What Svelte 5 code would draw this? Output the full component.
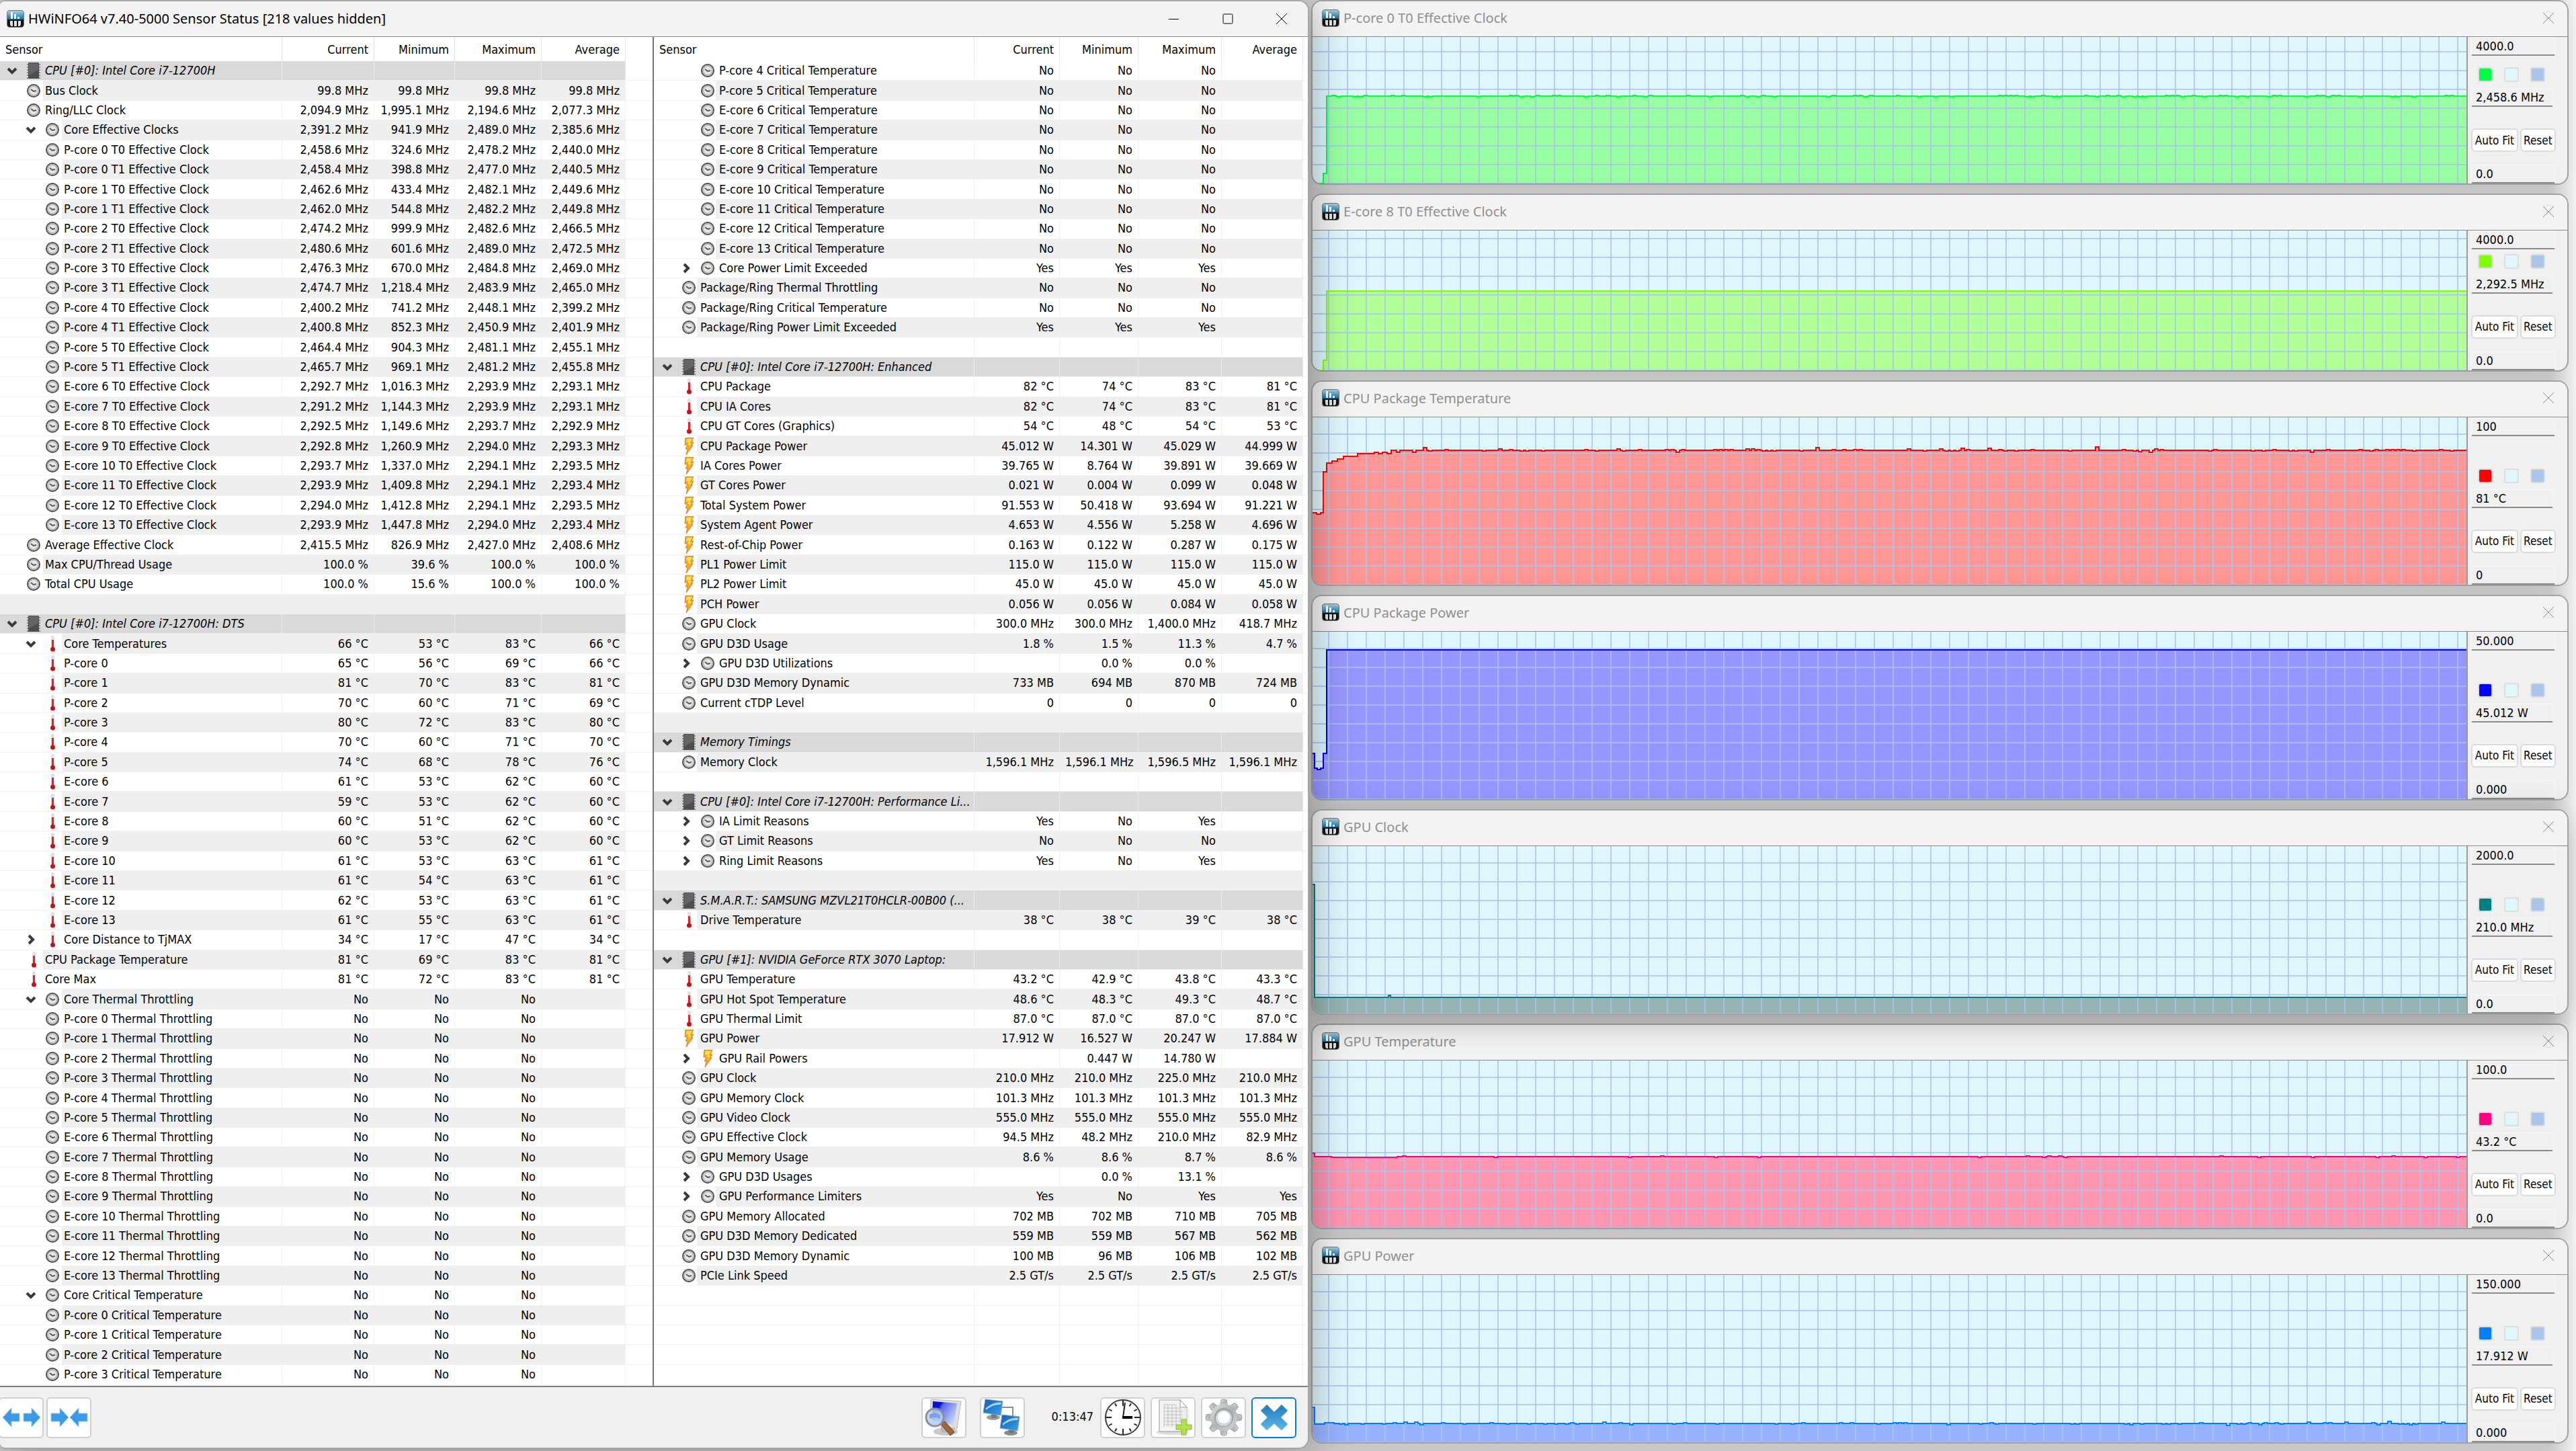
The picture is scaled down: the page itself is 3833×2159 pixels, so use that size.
<script>
  const head = (name) => ({ kind: "group", icon: "chip", name, open: true, values: ["", "", "", ""] });
  const item = (icon, name, values, level = 1, open = undefined) => ({
    kind: "item",
    icon,
    name,
    level,
    open,
    values: values.split("|")
  });
  const blank = () => ({ kind: "blank", name: "", values: ["", "", "", ""] });
  const mhz = (text) => text.split("|").map((v) => v + " MHz").join("|");
  const deg = (text) => text.split("|").map((v) => v + " °C").join("|");
  const watt = (text) => text.split("|").map((v) => v + " W").join("|");

  const NO = "No|No|No|";
  const YES = "Yes|Yes|Yes|";

  const cores = ["P-core 0", "P-core 1", "P-core 2", "P-core 3", "P-core 4", "P-core 5", "E-core 6", "E-core 7", "E-core 8", "E-core 9", "E-core 10", "E-core 11", "E-core 12", "E-core 13"];

  const effectiveClocks = [
    ["P-core 0 T0", "2,458.6|324.6|2,478.2|2,440.0"],
    ["P-core 0 T1", "2,458.4|398.8|2,477.0|2,440.5"],
    ["P-core 1 T0", "2,462.6|433.4|2,482.1|2,449.6"],
    ["P-core 1 T1", "2,462.0|544.8|2,482.2|2,449.8"],
    ["P-core 2 T0", "2,474.2|999.9|2,482.6|2,466.5"],
    ["P-core 2 T1", "2,480.6|601.6|2,489.0|2,472.5"],
    ["P-core 3 T0", "2,476.3|670.0|2,484.8|2,469.0"],
    ["P-core 3 T1", "2,474.7|1,218.4|2,483.9|2,465.0"],
    ["P-core 4 T0", "2,400.2|741.2|2,448.1|2,399.2"],
    ["P-core 4 T1", "2,400.8|852.3|2,450.9|2,401.9"],
    ["P-core 5 T0", "2,464.4|904.3|2,481.1|2,455.1"],
    ["P-core 5 T1", "2,465.7|969.1|2,481.2|2,455.8"],
    ["E-core 6 T0", "2,292.7|1,016.3|2,293.9|2,293.1"],
    ["E-core 7 T0", "2,291.2|1,144.3|2,293.9|2,293.1"],
    ["E-core 8 T0", "2,292.5|1,149.6|2,293.7|2,292.9"],
    ["E-core 9 T0", "2,292.8|1,260.9|2,294.0|2,293.3"],
    ["E-core 10 T0", "2,293.7|1,337.0|2,294.1|2,293.5"],
    ["E-core 11 T0", "2,293.9|1,409.8|2,294.1|2,293.4"],
    ["E-core 12 T0", "2,294.0|1,412.8|2,294.1|2,293.5"],
    ["E-core 13 T0", "2,293.9|1,447.8|2,294.0|2,293.4"]
  ];

  const coreTemps = [
    "65|56|69|66", "81|70|83|81", "70|60|71|69", "80|72|83|80", "70|60|71|70",
    "74|68|78|76", "61|53|62|60", "59|53|62|60", "60|51|62|60", "60|53|62|60",
    "61|53|63|61", "61|54|63|61", "62|53|63|61", "61|55|63|61"
  ];

  const leftRows = [
    head("CPU [#0]: Intel Core i7-12700H"),
    item("clock", "Bus Clock", mhz("99.8|99.8|99.8|99.8")),
    item("clock", "Ring/LLC Clock", mhz("2,094.9|1,995.1|2,194.6|2,077.3")),
    item("clock", "Core Effective Clocks", mhz("2,391.2|941.9|2,489.0|2,385.6"), 2, true),
    ...effectiveClocks.map(([name, v]) => item("clock", name + " Effective Clock", mhz(v), 2)),
    item("clock", "Average Effective Clock", mhz("2,415.5|826.9|2,427.0|2,408.6")),
    item("clock", "Max CPU/Thread Usage", "100.0 %|39.6 %|100.0 %|100.0 %"),
    item("clock", "Total CPU Usage", "100.0 %|15.6 %|100.0 %|100.0 %"),
    blank(),
    head("CPU [#0]: Intel Core i7-12700H: DTS"),
    item("temp", "Core Temperatures", deg("66|53|83|66"), 2, true),
    ...cores.map((name, i) => item("temp", name, deg(coreTemps[i]), 2)),
    item("temp", "Core Distance to TjMAX", deg("34|17|47|34"), 2, false),
    item("temp", "CPU Package Temperature", deg("81|69|83|81")),
    item("temp", "Core Max", deg("81|72|83|81")),
    item("clock", "Core Thermal Throttling", NO, 2, true),
    ...cores.map((name) => item("clock", name + " Thermal Throttling", NO, 2)),
    item("clock", "Core Critical Temperature", NO, 2, true),
    ...cores.slice(0, 4).map((name) => item("clock", name + " Critical Temperature", NO, 2))
  ];

  const rightRows = [
    ...cores.slice(4).map((name) => item("clock", name + " Critical Temperature", NO, 2)),
    item("clock", "Core Power Limit Exceeded", YES, 2, false),
    item("clock", "Package/Ring Thermal Throttling", NO),
    item("clock", "Package/Ring Critical Temperature", NO),
    item("clock", "Package/Ring Power Limit Exceeded", YES),
    blank(),
    head("CPU [#0]: Intel Core i7-12700H: Enhanced"),
    item("temp", "CPU Package", deg("82|74|83|81")),
    item("temp", "CPU IA Cores", deg("82|74|83|81")),
    item("temp", "CPU GT Cores (Graphics)", deg("54|48|54|53")),
    item("power", "CPU Package Power", watt("45.012|14.301|45.029|44.999")),
    item("power", "IA Cores Power", watt("39.765|8.764|39.891|39.669")),
    item("power", "GT Cores Power", watt("0.021|0.004|0.099|0.048")),
    item("power", "Total System Power", watt("91.553|50.418|93.694|91.221")),
    item("power", "System Agent Power", watt("4.653|4.556|5.258|4.696")),
    item("power", "Rest-of-Chip Power", watt("0.163|0.122|0.287|0.175")),
    item("power", "PL1 Power Limit", watt("115.0|115.0|115.0|115.0")),
    item("power", "PL2 Power Limit", watt("45.0|45.0|45.0|45.0")),
    item("power", "PCH Power", watt("0.056|0.056|0.084|0.058")),
    item("clock", "GPU Clock", mhz("300.0|300.0|1,400.0|418.7")),
    item("clock", "GPU D3D Usage", "1.8 %|1.5 %|11.3 %|4.7 %"),
    item("clock", "GPU D3D Utilizations", "|0.0 %|0.0 %|", 2, false),
    item("clock", "GPU D3D Memory Dynamic", "733 MB|694 MB|870 MB|724 MB"),
    item("clock", "Current cTDP Level", "0|0|0|0"),
    blank(),
    head("Memory Timings"),
    item("clock", "Memory Clock", mhz("1,596.1|1,596.1|1,596.5|1,596.1")),
    blank(),
    head("CPU [#0]: Intel Core i7-12700H: Performance Li..."),
    item("clock", "IA Limit Reasons", "Yes|No|Yes|", 2, false),
    item("clock", "GT Limit Reasons", "No|No|No|", 2, false),
    item("clock", "Ring Limit Reasons", "Yes|No|Yes|", 2, false),
    blank(),
    head("S.M.A.R.T.: SAMSUNG MZVL21T0HCLR-00B00 (..."),
    item("temp", "Drive Temperature", deg("38|38|39|38")),
    blank(),
    head("GPU [#1]: NVIDIA GeForce RTX 3070 Laptop:"),
    item("temp", "GPU Temperature", deg("43.2|42.9|43.8|43.3")),
    item("temp", "GPU Hot Spot Temperature", deg("48.6|48.3|49.3|48.7")),
    item("temp", "GPU Thermal Limit", deg("87.0|87.0|87.0|87.0")),
    item("power", "GPU Power", watt("17.912|16.527|20.247|17.884")),
    item("power", "GPU Rail Powers", "|0.447 W|14.780 W|", 2, false),
    item("clock", "GPU Clock", mhz("210.0|210.0|225.0|210.0")),
    item("clock", "GPU Memory Clock", mhz("101.3|101.3|101.3|101.3")),
    item("clock", "GPU Video Clock", mhz("555.0|555.0|555.0|555.0")),
    item("clock", "GPU Effective Clock", mhz("94.5|48.2|210.0|82.9")),
    item("clock", "GPU Memory Usage", "8.6 %|8.6 %|8.7 %|8.6 %"),
    item("clock", "GPU D3D Usages", "|0.0 %|13.1 %|", 2, false),
    item("clock", "GPU Performance Limiters", "Yes|No|Yes|Yes", 2, false),
    item("clock", "GPU Memory Allocated", "702 MB|702 MB|710 MB|705 MB"),
    item("clock", "GPU D3D Memory Dedicated", "559 MB|559 MB|567 MB|562 MB"),
    item("clock", "GPU D3D Memory Dynamic", "100 MB|96 MB|106 MB|102 MB"),
    item("clock", "PCIe Link Speed", "2.5 GT/s|2.5 GT/s|2.5 GT/s|2.5 GT/s"),
    ...Array.from({ length: 5 }, () => ({ ...blank(), kind: "empty" }))
  ];

  const lists = [
    { id: "left", rows: leftRows },
    { id: "right", rows: rightRows }
  ];
  const columns = ["Current", "Minimum", "Maximum", "Average"];

  // start: [x, share of the height] pairs, the last one is the level that holds
  let graphs = $state([
    { title: "P-core 0 T0 Effective Clock", max: "4000.0", now: "2,458.6 MHz", min: "0.0", line: "#00ff40", fill: "#97ffa2", start: [[0, 0.002], [16, 0.07], [21, 0.596]], jitter: 2, rate: 0.45, bias: 0.6, grow: 275, w: 0, h: 0 },
    { title: "E-core 8 T0 Effective Clock", max: "4000.0", now: "2,292.5 MHz", min: "0.0", line: "#80ff00", fill: "#b2ff97", start: [[0, 0.002], [16, 0.07], [21, 0.566]], jitter: 0, rate: 0, bias: 0, grow: 264, w: 0, h: 0 },
    { title: "CPU Package Temperature", max: "100", now: "81 °C", min: "0", line: "#ff0000", fill: "#ff9696", start: [[0, 0.43], [6, 0.42], [12, 0.43], [16, 0.675], [21, 0.728], [29, 0.74], [37, 0.75], [46, 0.767], [67, 0.783], [92, 0.793], [98, 0.785], [104, 0.793], [111, 0.785], [117, 0.805]], jitter: 5, rate: 0.45, bias: 0.6, grow: 306, w: 0, h: 0 },
    { title: "CPU Package Power", max: "50.000", now: "45.012 W", min: "0.000", line: "#0000ff", fill: "#9696ff", start: [[0, 0.275], [3, 0.185], [7, 0.175], [12, 0.185], [16, 0.275], [21, 0.893]], jitter: 0, rate: 0, bias: 0, grow: 306, w: 0, h: 0 },
    { title: "GPU Clock", max: "2000.0", now: "210.0 MHz", min: "0.0", line: "#008080", fill: "#97b2b2", start: [[0, 0.77], [3, 0.096], [113, 0.107], [116, 0.096]], jitter: 0, rate: 0, bias: 0, grow: 306, w: 0, h: 0 },
    { title: "GPU Temperature", max: "100.0", now: "43.2 °C", min: "0.0", line: "#ff0080", fill: "#ff96b2", start: [[0, 0.447], [3, 0.427], [28, 0.422], [126, 0.427]], jitter: 1, rate: 0.12, bias: 0.5, grow: 306, w: 0, h: 0 },
    { title: "GPU Power", max: "150.000", now: "17.912 W", min: "0.000", line: "#0080ff", fill: "#96b2ff", start: [[0, 0.21], [3, 0.107], [18, 0.117], [32, 0.112]], jitter: 4, rate: 0.3, bias: 0.4, grow: 306, w: 0, h: 0 }
  ]);

  function trace(graph) {
    const { start, jitter, rate, bias, w, h } = graph;
    const y = (v) => Math.round(h - v * h);
    const last = start[start.length - 1];
    let path = "M0 " + y(start[0][1]);
    for (const [x, v] of start.slice(1)) {
      path += `H${x}V${y(v)}`;
    }
    if (jitter) {
      const base = y(last[1]);
      let seed = 17 + jitter * 31;
      const random = () => (seed = (seed * 16807) % 2147483647) / 2147483647;
      for (let x = last[0] + 8; x < w - 12; x += 8) {
        if (random() < rate) {
          const size = Math.max(1, Math.round(random() * random() * jitter));
          const to = random() < bias ? base - size : base + size;
          path += `H${x}V${to}H${x + 5}V${base}`;
        }
      }
    }
    return path + "H" + w;
  }

  const range = (from, to, step) => {
    const out = [];
    for (let v = from; step > 0 ? v < to : v > to; v += step) out.push(v);
    return out;
  };
</script>

{#snippet appIcon()}
  <svg class="app-icon" viewBox="0 0 26 26" aria-hidden="true">
    <defs>
      <linearGradient id="sky" x1="0" y1="0" x2="0" y2="1">
        <stop offset="0" stop-color="#a9cfe0" />
        <stop offset="1" stop-color="#0a6fa8" />
      </linearGradient>
    </defs>
    <rect x="0.5" y="0.5" width="25" height="25" rx="4" fill="#141414" stroke="#777" />
    <path d="M1 14V4q0-3 3-3h18q3 0 3 3v10z" fill="url(#sky)" />
    <path d="M6 3h3v10H6zM11 6h3v7h-3zM16 10h3v3h-3z" fill="#fff" />
    <path d="M5 16h4v8H7q-2-1-2-3zM11 16h4v8h-4zM17 16h4v5q0 2-2 3h-2z" fill="#e4e4e4" />
  </svg>
{/snippet}

{#snippet sensorIcon(kind)}
  <svg class="sensor-icon" viewBox="0 0 20 26" aria-hidden="true">
    {#if kind === "chip"}
      <path d="M0 4h20M0 8h20M0 12h20M0 16h20M0 20h20M0 24h20" stroke="#8c8c8c" stroke-width="2" />
      <rect x="2" y="1" width="16" height="24" rx="1" fill="#4c4e51" />
      <path d="M3 2h14v10L3 20z" fill="#636568" />
    {:else if kind === "clock"}
      <circle cx="10" cy="13" r="9" fill="#e6e6e6" stroke="#4c4c4c" stroke-width="2" />
      <circle cx="10" cy="13" r="7" fill="none" stroke="#b8b8b8" stroke-width="2" />
      <path d="M6 11l4 3 4-1" fill="none" stroke="#6b5048" stroke-width="2" />
    {:else if kind === "temp"}
      <rect x="8" y="1" width="5" height="20" rx="2" fill="#e0e0e0" />
      <rect x="9" y="7" width="3" height="14" fill="#d8262a" />
      <circle cx="10.5" cy="21" r="3.5" fill="#c41418" />
    {:else if kind === "power"}
      <path d="M5 0h12l-3 7h3l-3 5h2L6 26l2-9H5l3-6H4z" fill="#f6a623" stroke="#b9772a" stroke-width="0.8" />
      <path d="M7 2h8l-4 7h3l-4 6 1-4H8l2-4H6z" fill="#ffdf5a" />
    {/if}
  </svg>
{/snippet}

<div class="desktop">
  <main class="window sensors">
    <header class="titlebar">
      {@render appIcon()}
      <h1>HWiNFO64 v7.40-5000 Sensor Status [218 values hidden]</h1>
      <div class="controls">
        <button aria-label="Minimize"><svg viewBox="0 0 16 16"><path d="M0 8.500h15" /></svg></button>
        <button aria-label="Maximize"><svg viewBox="0 0 16 16"><rect x="1" y="1" width="14" height="14" rx="1.500" /></svg></button>
        <button aria-label="Close"><svg viewBox="0 0 16 16"><path d="M0 0l16 16M16 0L0 16" /></svg></button>
      </div>
    </header>

    <div class="lists">
      {#each lists as list}
        <section class="list {list.id}">
          <table>
            <colgroup>
              <col />
              <col class="c-current" />
              <col class="c-minimum" />
              <col class="c-maximum" />
              <col class="c-average" />
              <col class="c-gutter" />
            </colgroup>
            <thead>
              <tr>
                <th class="first">Sensor</th>
                {#each columns as column}
                  <th>{column}</th>
                {/each}
                <th class="gutter"></th>
              </tr>
            </thead>
            <tbody>
              {#each list.rows as row}
                <tr class={row.kind}>
                  <td class="name" class:deep={row.level === 2}>
                    <div class="label">
                      <span class="slot">
                        {#if row.open !== undefined}
                          <button class="expander" aria-label={row.open ? "Collapse" : "Expand"}>
                            <svg viewBox="0 0 16 16">
                              <path d={row.open ? "M2 5l6 6 6-6" : "M5 2l6 6-6 6"} />
                            </svg>
                          </button>
                        {/if}
                      </span>
                      {@render sensorIcon(row.icon)}
                      <span>{row.name}</span>
                    </div>
                  </td>
                  {#each row.values as value}
                    <td>{value}</td>
                  {/each}
                  <td class="gutter"></td>
                </tr>
              {/each}
            </tbody>
          </table>
        </section>
      {/each}
    </div>

    <footer class="toolbar">
      <button class="edge" aria-label="Expand columns">
        <svg viewBox="0 0 56 56">
          <g fill="#3a9ae6" stroke="#9cc7ea">
            <path d="M0 28l13-14v8h12v12H13v8z" />
            <path d="M56 28L43 14v8H31v12h12v8z" />
          </g>
        </svg>
      </button>
      <button aria-label="Shrink columns">
        <svg viewBox="0 0 56 56">
          <g fill="#3a9ae6" stroke="#9cc7ea">
            <path d="M27 28L14 14v8H1v12h13v8z" />
            <path d="M29 28l13-14v8h13v12H42v8z" />
          </g>
        </svg>
      </button>
      <span class="spring"></span>
      <button class="wide-gap" aria-label="System summary">
        <svg viewBox="0 0 56 56">
          <defs>
            <linearGradient id="screen" x1="0" y1="0" x2="1" y2="0.600">
              <stop offset="0.300" stop-color="#0a12c8" />
              <stop offset="0.400" stop-color="#5a6bea" />
              <stop offset="1" stop-color="#c6d2fb" />
            </linearGradient>
          </defs>
          <ellipse cx="31" cy="49" rx="18" ry="6" fill="#c9c9c9" />
          <path d="M24 40l20 3v8l-20-1z" fill="#b5b5b5" />
          <path d="M9 1l45 3-6 41-40-8z" fill="#dedede" stroke="#bbb" />
          <path d="M12 4l36 3-5 32-32-7z" fill="url(#screen)" />
          <path d="M24 38l6-4 14 16-6 5z" fill="#a0673c" stroke="#6b4023" />
          <circle cx="15" cy="28" r="13" fill="#bcd4f4" fill-opacity="0.850" stroke="#8b9097" stroke-width="3" />
          <path d="M7 24q8-5 16 0v6q-8-4-16 0z" fill="#7f9fe0" />
        </svg>
      </button>
      <button class="wide-gap" aria-label="Remote monitoring">
        <svg viewBox="0 0 56 56">
          <defs>
            <linearGradient id="lcd" x1="0" y1="0" x2="1" y2="1">
              <stop offset="0" stop-color="#0f5db8" />
              <stop offset="1" stop-color="#3aa0ee" />
            </linearGradient>
          </defs>
          <path d="M28 13h16v14" fill="none" stroke="#8c9094" stroke-width="2" />
          <ellipse cx="15" cy="28" rx="10" ry="4" fill="#9a9d9f" />
          <path d="M12 20h8v9h-8z" fill="#777" />
          <path d="M3 1l26 3-3 21-26-4z" fill="url(#lcd)" stroke="#8aa" />
          <path d="M4 14q12-10 23-8l-1 3q-11-1-22 8z" fill="#a9d5fa" />
          <ellipse cx="41" cy="51" rx="10" ry="4" fill="#8b8e90" />
          <path d="M38 42h8v9h-8z" fill="#777" />
          <path d="M28 24l26 3-3 21-26-4z" fill="url(#lcd)" stroke="#8aa" />
          <path d="M29 37q12-10 23-8l-1 3q-11-1-22 8z" fill="#a9d5fa" />
        </svg>
      </button>
      <time>0:13:47</time>
      <button aria-label="Reset clock">
        <svg viewBox="0 0 56 56">
          <circle cx="28" cy="28" r="26" fill="#fff" stroke="#3c3c3c" stroke-width="2" />
          {#each range(0, 12, 1) as hour}
            <path d={hour % 3 ? "M28 4v5" : "M28 3v8"} transform="rotate({hour * 30} 28 28)" stroke="#222" stroke-width="2" />
          {/each}
          <path d="M28 28l3-22" stroke="#222" stroke-width="2" />
          <path d="M27 28h15" stroke="#000" stroke-width="4" />
        </svg>
      </button>
      <button aria-label="Start logging">
        <svg viewBox="0 0 56 56">
          <ellipse cx="26" cy="50" rx="24" ry="4" fill="#ddd" />
          <path d="M7 2h31l10 11v36H7z" fill="#f4f4f4" stroke="#9a9a9a" />
          <path d="M38 2l10 11H38z" fill="#fff" stroke="#9a9a9a" />
          <path d="M14 9h17v5h21v24H14z" fill="#e8e8e8" fill-opacity="0.500" />
          <path d="M14 9h17M14 14h24M14 19h28M14 24h28M14 29h28M14 34h28M14 39h17M14 9v33M20 9v33M26 9v33M32 9v30M38 14v20" stroke="#c2c2c2" />
          <path d="M40 31h7v8h8v7h-8v8h-7v-8h-8v-7h8z" fill="#b5e04e" stroke="#86b52f" />
        </svg>
      </button>
      <button aria-label="Configure sensors">
        <svg viewBox="0 0 56 56">
          <defs>
            <linearGradient id="steel" x1="0" y1="0" x2="1" y2="1">
              <stop offset="0" stop-color="#dfe2e3" />
              <stop offset="0.500" stop-color="#aeb4b6" />
              <stop offset="1" stop-color="#d3d7d8" />
            </linearGradient>
          </defs>
          <g fill="url(#steel)" stroke="#9aa0a2">
            {#each range(0, 8, 1) as tooth}
              <path d="M22 14l2-12q4-2 8 0l2 12z" transform="rotate({tooth * 45} 28 28)" />
            {/each}
          </g>
          <circle cx="28" cy="28" r="20" fill="url(#steel)" />
          <circle cx="28" cy="28" r="14" fill="#9da3a5" />
          <circle cx="28" cy="29" r="12" fill="#d4d8d9" />
          <circle cx="28" cy="28" r="9" fill="#fff" />
        </svg>
      </button>
      <button class="primary" aria-label="Close sensors">
        <svg viewBox="0 0 56 56">
          <defs>
            <linearGradient id="cross" x1="0" y1="0" x2="0" y2="1">
              <stop offset="0" stop-color="#1f7db8" />
              <stop offset="1" stop-color="#5cb6ea" />
            </linearGradient>
          </defs>
          <path d="M17 9l11 11L39 9l9 9-10 10 10 10-9 9-11-10-11 10-9-9 10-10L8 18z" fill="url(#cross)" stroke="#7fb4d6" />
        </svg>
      </button>
    </footer>
  </main>

  <div class="graphs">
    {#each graphs as graph}
      <section class="window graph" style="flex-grow: {graph.grow}">
        <header class="titlebar">
          {@render appIcon()}
          <h2>{graph.title}</h2>
          <div class="controls">
            <button aria-label="Close"><svg viewBox="0 0 16 16"><path d="M0 0l16 16M16 0L0 16" /></svg></button>
          </div>
        </header>
        <div class="body">
          <div class="plot" bind:clientWidth={graph.w} bind:clientHeight={graph.h}>
            <svg width={graph.w} height={graph.h} aria-label={graph.title} role="img">
              <path d="{trace(graph)}V{graph.h}H0z" fill={graph.fill} />
              <g class="grid">
                {#each range(24, graph.w, 28) as x}
                  <path d="M{x} 0V{graph.h}" />
                {/each}
                {#each range(graph.h, 0, -28) as y}
                  <path d="M0 {y}H{graph.w}" />
                {/each}
              </g>
              <path class="line" d={trace(graph)} stroke={graph.line} />
            </svg>
          </div>
          <div class="side">
            <input value={graph.max} aria-label="Maximum" />
            <span class="spring"></span>
            <div class="swatches">
              <button aria-label="Line colour" style="background-color: {graph.line}"></button>
              <button class="paper" aria-label="Background colour"></button>
              <button class="rule" aria-label="Grid colour"></button>
            </div>
            <input class="now" value={graph.now} readonly aria-label="Current value" />
            <div class="actions">
              <button class="fit">Auto Fit</button>
              <button>Reset</button>
            </div>
            <input value={graph.min} aria-label="Minimum" />
          </div>
        </div>
      </section>
    {/each}
  </div>
</div>

<style>
  :global(body) {
    margin: 0;
    background: #dcdcdc;
  }

  .desktop {
    display: grid;
    grid-template-columns: minmax(0, 1948fr) minmax(0, 1885fr);
    box-sizing: border-box;
    height: 100vh;
    padding-bottom: 3px;
    overflow: hidden;
    background: linear-gradient(to right, #d2d2d2 99%, #f6f6f6);
    font-family: "DejaVu Sans Condensed", "Noto Sans", sans-serif;
    font-size: 18px;
    color: #000;
  }

  button {
    padding: 0;
    border: none;
    background: none;
    font: inherit;
    color: inherit;
  }

  .window {
    display: flex;
    flex-direction: column;
    box-sizing: border-box;
    border: 2px solid #a6a6a6;
    border-radius: 16px;
    background: #f0f0f0;
    overflow: hidden;
  }

  .sensors {
    position: relative;
    z-index: 5;
    border-left: none;
    border-radius: 8px 16px 16px 8px;
    box-shadow: 0 8px 64px rgba(0, 0, 0, 0.36);
    min-height: 0;
  }

  .titlebar {
    display: flex;
    flex: none;
    align-items: center;
    box-sizing: border-box;
    height: 53px;
    padding: 0 0 1px 10px;
    background: #f3f3f3;
    border-bottom: 1px solid #8b8b8b;
  }

  .app-icon {
    width: 26px;
    height: 26px;
    margin-right: 6px;
  }

  h1,
  h2 {
    flex: 1;
    margin: 0;
    font-family: "Noto Sans", sans-serif;
    font-size: 20px;
    font-weight: 400;
  }

  .controls {
    display: flex;
    gap: 64px;
    padding-right: 31px;
  }

  .controls button {
    display: flex;
  }

  .controls svg {
    width: 16px;
    height: 16px;
    fill: none;
    stroke: #000;
    overflow: visible;
  }

  .lists {
    display: grid;
    grid-template-columns: 973fr 973fr;
    flex: 1;
    min-height: 0;
    background: #fff;
    border-bottom: 2px solid #7d7d82;
  }

  .list {
    padding: 1px 0;
    overflow: hidden;
    min-height: 0;
  }

  .list.left {
    border-right: 2px solid #76767c;
  }

  table {
    width: 100%;
    height: 100%;
    border-collapse: separate;
    border-spacing: 0;
    table-layout: fixed;
  }

  .c-current {
    width: 137px;
  }

  .c-minimum {
    width: 120px;
  }

  .c-maximum {
    width: 129px;
  }

  .c-average {
    width: 125px;
  }

  .c-gutter {
    width: 40px;
  }

  .right .c-current {
    width: 127px;
  }

  .right .c-minimum {
    width: 117px;
  }

  .right .c-maximum {
    width: 124px;
  }

  .right .c-average {
    width: 121px;
  }

  .right .c-gutter {
    width: 7px;
  }

  thead tr {
    height: 35px;
  }

  th {
    padding: 0 8px;
    border-right: 1px solid #e2e2e2;
    font-weight: 400;
    text-align: right;
  }

  th.first {
    text-align: left;
  }

  td {
    padding: 0 8px;
    border-right: 1px solid #efefef;
    border-bottom: 1px solid #f0f0f0;
    line-height: 24px;
    text-align: right;
    white-space: nowrap;
  }

  .item:nth-child(even) td,
  .blank:nth-child(even) td {
    background: #efefef;
  }

  tr.group td {
    background: #d9d9d9;
    border-right-color: #e9e9e9;
    font-style: italic;
  }

  tr .name,
  tr.item .name {
    --indent: 64px;
    padding: 0;
    text-align: left;
    background-image: linear-gradient(to right, #fff var(--indent), transparent 0);
  }

  tr.item .name.deep {
    --indent: 92px;
  }

  tr.item td.gutter,
  tr.blank td.gutter,
  tr.group td.gutter,
  .gutter {
    padding: 0;
    border-right: none;
    background: #fff;
  }

  .label {
    display: flex;
    align-items: center;
    padding-left: 8px;
  }

  .deep .label {
    padding-left: 36px;
  }

  .right .label {
    margin-left: 2px;
  }

  .slot {
    width: 20px;
    height: 20px;
    margin-right: 12px;
  }

  .expander {
    display: flex;
    align-items: center;
    justify-content: center;
    width: 20px;
    height: 20px;
  }

  .expander svg {
    width: 16px;
    height: 16px;
    fill: none;
    stroke: #3a3a3a;
    stroke-width: 4;
  }

  .sensor-icon {
    width: 20px;
    height: 26px;
    margin-right: 7px;
  }

  .toolbar {
    display: flex;
    flex: none;
    align-items: center;
    gap: 8px;
    height: 90px;
    padding-right: 17px;
  }

  .toolbar button {
    display: flex;
    align-items: center;
    justify-content: center;
    box-sizing: border-box;
    width: 67px;
    height: 61px;
    background: #fdfdfd;
    border: 2px solid #d0d0d0;
    border-radius: 6px;
  }

  .toolbar button.edge {
    margin: 0 -4px 0 -2px;
  }

  .toolbar button.primary {
    border-color: #0f7ad6;
  }

  .toolbar svg {
    width: 56px;
    height: 56px;
  }

  .toolbar .wide-gap {
    margin-right: 12px;
  }

  .toolbar time {
    margin: 0 2px 4px 20px;
  }

  .spring {
    flex: 1;
  }

  .graphs {
    display: flex;
    flex-direction: column;
    gap: 13px;
    padding: 0 11px 8px 3px;
    min-height: 0;
  }

  .graph {
    position: relative;
    flex: 1 1 0;
    min-height: 0;
    border-color: #a2a2a2;
    box-shadow: 0 12px 48px rgba(0, 0, 0, 0.08);
  }

  .graph:nth-child(5) {
    z-index: 1;
    box-shadow: 0 12px 48px rgba(0, 0, 0, 0.25);
  }

  .graph:nth-child(7) {
    z-index: 2;
  }

  .graph .titlebar {
    padding: 0 0 3px 14px;
  }

  .graph h2 {
    color: #8f8f8f;
  }

  .graph .controls {
    padding-right: 20px;
  }

  .graph .controls svg {
    stroke: #8a8a8a;
  }

  .body {
    display: flex;
    flex: 1;
    min-height: 0;
  }

  .plot {
    flex: 1;
    min-width: 0;
    overflow: hidden;
    background: #dff6fd;
    border-right: 2px solid #9a9a9a;
  }

  .plot svg {
    display: block;
  }

  .grid path {
    stroke: #a9c4ea;
    stroke-opacity: 0.8;
    stroke-width: 2;
  }

  .line {
    fill: none;
    stroke-width: 2;
  }

  .side {
    display: flex;
    flex-direction: column;
    box-sizing: border-box;
    width: 148px;
    padding: 0 17px 0 5px;
  }

  input {
    box-sizing: border-box;
    width: 125px;
    height: 28px;
    padding: 0 6px;
    border: 1px solid #f9f9f9;
    border-bottom: 2px solid #8a8a8a;
    border-radius: 2px;
    background: #f0f0f0;
    font: inherit;
    color: #000;
  }

  .swatches {
    display: flex;
    gap: 17px;
    padding-left: 10px;
  }

  .swatches button {
    box-sizing: border-box;
    width: 22px;
    height: 22px;
    border: 2px solid #dcdcdc;
    border-radius: 4px;
  }

  .swatches .paper {
    background: #dff6fd;
  }

  .swatches .rule {
    background: #abc4e9;
  }

  .now {
    width: 122px;
    margin: 9px 0 32px;
  }

  .actions {
    display: flex;
    gap: 3px;
    margin-bottom: 19px;
  }

  .actions button {
    box-sizing: border-box;
    width: 54px;
    height: 35px;
    background: #fdfdfd;
    border: 2px solid #dadada;
    border-radius: 6px;
    font-size: 17px;
    white-space: nowrap;
  }

  .actions .fit {
    width: 71px;
  }
</style>
